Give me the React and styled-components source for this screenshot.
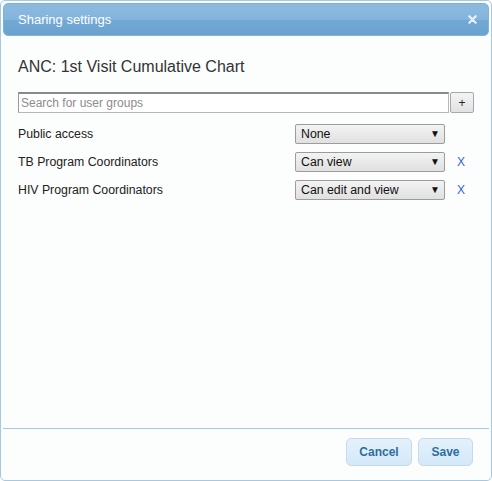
import React, {useState} from 'react';
import styled, {createGlobalStyle} from 'styled-components';

const GlobalStyle = createGlobalStyle`
    html, body {
        margin: 0;
        padding: 0;
        background: #ffffff;
    }
    body {
        font-family: "Liberation Sans", Arial, sans-serif;
    }
`;

const Dialog = styled.div`
    // jQuery UI 스타일 다이얼로그
    width: 492px;
    height: 481px;
    box-sizing: border-box;
    border: 1px solid #a6c9e2;
    border-radius: 5px;
    padding: 2px;
    background-color: #fcfdfd;
    display: flex;
    flex-direction: column;
`;

const TitleBar = styled.div`
    height: 33px;
    box-sizing: border-box;
    border: 1px solid #7fb1dc;
    border-radius: 5px;
    background: linear-gradient(to bottom, #8dbbdf 0%, #84b4dc 50%, #72a8d4 52%, #6aa2d0 100%);
    display: flex;
    align-items: center;
    justify-content: space-between;
    padding: 0 11px 0 14px;
    color: #ffffff;
    font-size: 13px;
`;

const CloseButton = styled.button`
    border: none;
    background: none;
    padding: 0;
    width: 10px;
    height: 10px;
    display: flex;
    align-items: center;
    justify-content: center;
    cursor: pointer;
    opacity: 0.8;
`;

const Content = styled.div`
    flex: 1;
    padding: 21px 15px 0 15px;
`;

const ChartTitle = styled.h2`
    margin: 0 0 15px 0;
    font-size: 16px;
    font-weight: normal;
    color: #333333;
    line-height: 20px;
`;

const SearchRow = styled.div`
    display: flex;
    align-items: stretch;
    height: 21px;
    margin-bottom: 7px;
`;

const SearchInput = styled.input`
    width: 431px;
    box-sizing: border-box;
    border: 1px solid #b8b8b8;
    border-top: 2px solid #8a8a8a;
    border-left-color: #9a9a9a;
    padding: 0 2px;
    font-family: "Liberation Sans", Arial, sans-serif;
    font-size: 12px;
    color: #333333;
    background: #ffffff;
    outline: none;

    &::placeholder {
        color: #8c8c8c;
    }
`;

const AddButton = styled.button`
    width: 24px;
    margin-left: 1px;
    box-sizing: border-box;
    border: 1px solid #a8a8a8;
    border-radius: 2px;
    background: linear-gradient(to bottom, #f4f4f4, #e2e2e2);
    font-family: "Liberation Sans", Arial, sans-serif;
    font-size: 12px;
    color: #222222;
    padding: 0;
    cursor: pointer;
`;

const AccessRow = styled.div`
    display: flex;
    align-items: center;
    height: 28px;
`;

const GroupName = styled.div`
    width: 277px;
    font-size: 12.3px;
    color: #222222;
`;

const SelectWrap = styled.span`
    position: relative;
    display: inline-block;
    width: 150px;
    height: 20px;
`;

const AccessSelect = styled.select`
    appearance: none;
    -webkit-appearance: none;
    width: 100%;
    height: 100%;
    box-sizing: border-box;
    border: 1px solid #9c9c9c;
    border-radius: 2px;
    background: linear-gradient(to bottom, #f3f3f3, #e0e0e0);
    font-family: "Liberation Sans", Arial, sans-serif;
    font-size: 12.3px;
    color: #111111;
    padding: 0 5px;
    outline: none;
`;

const Arrow = styled.span`
    position: absolute;
    right: 5px;
    top: 4px;
    font-size: 10px;
    color: #111111;
    pointer-events: none;
`;

const RemoveLink = styled.a`
    margin-left: 12px;
    font-size: 12px;
    color: #3366cc;
    text-decoration: none;
    cursor: pointer;
`;

const ButtonPane = styled.div`
    border-top: 1px solid #a6c9e2;
    display: flex;
    justify-content: flex-end;
    gap: 6px;
    padding: 9px 16px 12px 0;
`;

const PaneButton = styled.button`
    height: 28px;
    width: ${(props) => props.width}px;
    box-sizing: border-box;
    border: 1px solid #c5dbec;
    border-radius: 5px;
    background: linear-gradient(to bottom, #e4f1fb 0%, #dcedfa 50%, #d4e8f8 100%);
    font-family: "Liberation Sans", Arial, sans-serif;
    font-size: 12px;
    font-weight: bold;
    color: #2e6e9e;
    cursor: pointer;
    padding: 0;
`;

const CloseIcon = () => (
    <svg width="9" height="9" viewBox="0 0 9 9">
        <path d="M1.3 1.3 L7.7 7.7 M7.7 1.3 L1.3 7.7" stroke="#ffffff" strokeWidth="2.3" strokeLinecap="round"/>
    </svg>
);

const options = ['None', 'Can view', 'Can edit and view'];

const AccessItem = ({name, value, removable}) => {
    const [access, setAccess] = useState(value);
    return (
        <AccessRow>
            <GroupName>{name}</GroupName>
            <SelectWrap>
                <AccessSelect value={access} onChange={(e) => setAccess(e.target.value)}>
                    {options.map((o) => <option key={o} value={o}>{o}</option>)}
                </AccessSelect>
                <Arrow>▼</Arrow>
            </SelectWrap>
            {removable ? <RemoveLink>X</RemoveLink> : null}
        </AccessRow>
    );
};

export default function App() {
    return (
        <>
            <GlobalStyle/>
            <Dialog role="dialog">
                <TitleBar>
                    <span>Sharing settings</span>
                    <CloseButton aria-label="close"><CloseIcon/></CloseButton>
                </TitleBar>
                <Content>
                    <ChartTitle>ANC: 1st Visit Cumulative Chart</ChartTitle>
                    <SearchRow>
                        <SearchInput placeholder="Search for user groups"/>
                        <AddButton>+</AddButton>
                    </SearchRow>
                    <AccessItem name="Public access" value="None"/>
                    <AccessItem name="TB Program Coordinators" value="Can view" removable/>
                    <AccessItem name="HIV Program Coordinators" value="Can edit and view" removable/>
                </Content>
                <ButtonPane>
                    <PaneButton width={66}>Cancel</PaneButton>
                    <PaneButton width={55}>Save</PaneButton>
                </ButtonPane>
            </Dialog>
        </>
    );
}
